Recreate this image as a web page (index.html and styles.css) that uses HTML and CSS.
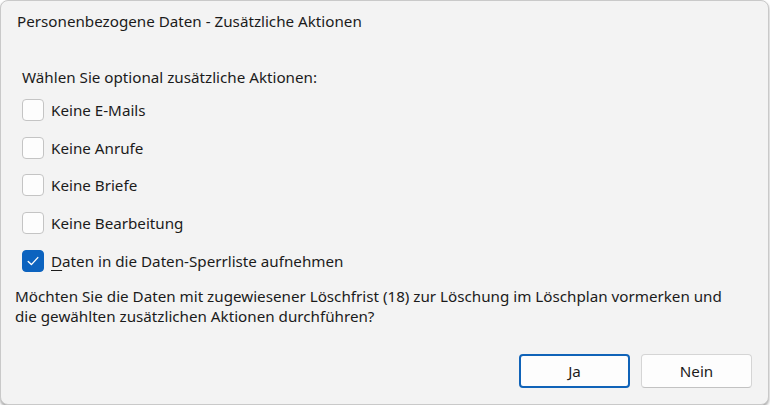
FILE: index.html
```html
<!DOCTYPE html>
<html lang="de">
<head>
<meta charset="utf-8">
<title>Personenbezogene Daten - Zusätzliche Aktionen</title>
<link rel="stylesheet" href="styles.css">
</head>
<body>
<div class="dialog">
  <div class="title">Personenbezogene Daten - Zusätzliche Aktionen</div>
  <div class="content">
    <div class="prompt">Wählen Sie optional zusätzliche Aktionen:</div>
    <div class="options">
      <label class="option"><span class="box"></span><span class="text">Keine E-Mails</span></label>
      <label class="option"><span class="box"></span><span class="text">Keine Anrufe</span></label>
      <label class="option"><span class="box"></span><span class="text">Keine Briefe</span></label>
      <label class="option"><span class="box"></span><span class="text">Keine Bearbeitung</span></label>
      <label class="option"><span class="box checked"><svg viewBox="0 0 20 20" width="20" height="20"><path d="M5.2 10.4 L8.4 13.6 L14.8 6.6" fill="none" stroke="#fff" stroke-width="1.4" stroke-linecap="round" stroke-linejoin="round"/></svg></span><span class="text"><u>D</u>aten in die Daten-Sperrliste aufnehmen</span></label>
    </div>
    <p class="question">Möchten Sie die Daten mit zugewiesener Löschfrist (18) zur Löschung im Löschplan vormerken und die gewählten zusätzlichen Aktionen durchführen?</p>
  </div>
  <div class="buttons">
    <button class="btn primary">Ja</button>
    <button class="btn">Nein</button>
  </div>
</div>
</body>
</html>
```
FILE: styles.css
```css
html, body {
  margin: 0;
  padding: 0;
  background: #ffffff;
}
body {
  font-family: "Noto Sans", "Open Sans", sans-serif;
  color: #1b1b1b;
  font-size: 15.2px;
}
.dialog {
  box-sizing: border-box;
  width: 769px;
  height: 405px;
  background: #f3f3f3;
  border: 1px solid #c9c9c9;
  border-radius: 8px;
  box-shadow: 0 2px 3px rgba(0, 0, 0, 0.35);
  display: flex;
  flex-direction: column;
}
.title {
  padding: 10px 0 0 16px;
  height: 22px;
  line-height: 20px;
}
.content {
  padding: 0 0 0 14px;
}
.prompt {
  margin-top: 34px;
  padding-left: 7px;
  line-height: 20px;
}
.options {
  display: flex;
  flex-direction: column;
  gap: 17.7px;
  margin-top: 13px;
  padding-left: 7px;
}
.option {
  display: flex;
  align-items: center;
  gap: 7px;
  height: 20px;
}
.box {
  box-sizing: border-box;
  width: 22px;
  height: 22px;
  border: 1px solid #c4c4c4;
  background: #fdfdfd;
  border-radius: 4px;
  display: flex;
  align-items: center;
  justify-content: center;
}
.box.checked {
  background: #0c63bf;
  border-color: #0c63bf;
}
.box svg {
  display: block;
}
.text u {
  text-decoration-thickness: 1px;
  text-underline-offset: 3px;
}
.question {
  margin: 15px 0 0 0;
  line-height: 20px;
  width: 726px;
}
.buttons {
  display: flex;
  justify-content: flex-end;
  gap: 11px;
  padding: 0 16px 0 0;
  margin-top: auto;
  margin-bottom: 16px;
}
.btn {
  box-sizing: border-box;
  width: 111px;
  height: 34px;
  font-family: inherit;
  font-size: 15.2px;
  color: #1b1b1b;
  background: #fdfdfd;
  border: 1px solid #d5d5d5;
  border-bottom-color: #c2c2c2;
  border-radius: 4px;
  padding: 0;
}
.btn.primary {
  border: 2px solid #1063b8;
}
```
